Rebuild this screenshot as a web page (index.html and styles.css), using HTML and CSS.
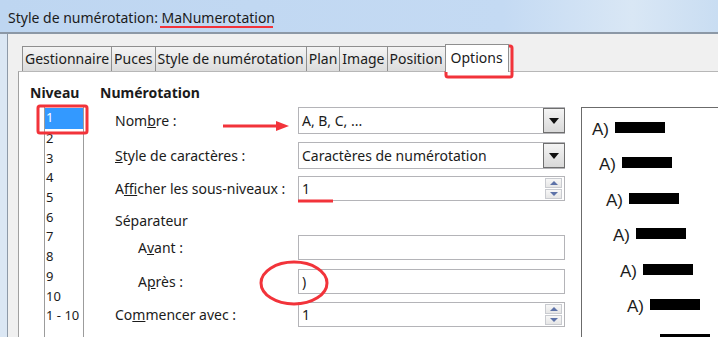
FILE: index.html
```html
<!DOCTYPE html>
<html>
  <head>
    <title>Style de numérotation</title>
    <link rel="stylesheet" href="styles.css">
  </head>
  <body>
    <div class="titlebar">Style de numérotation: MaNumerotation</div>

    <div class="window">
      <div class="tabs">
        <div class="tab">Gestionnaire</div>
        <div class="tab">Puces</div>
        <div class="tab">Style de numérotation</div>
        <div class="tab">Plan</div>
        <div class="tab">Image</div>
        <div class="tab">Position</div>
        <div class="tab active">Options</div>
      </div>

      <div class="panel">
        <div class="levels">
          <div class="heading">Niveau</div>
          <ul class="level-list">
            <li class="selected">1</li>
            <li>2</li>
            <li>3</li>
            <li>4</li>
            <li>5</li>
            <li>6</li>
            <li>7</li>
            <li>8</li>
            <li>9</li>
            <li>10</li>
            <li>1 - 10</li>
          </ul>
        </div>

        <div class="numbering">
          <div class="heading">Numérotation</div>
          <div class="form">
            <div class="row row-select">
              <label>Nom<u>b</u>re :</label>
              <div class="field select">
                <span class="value">A, B, C, ...</span>
                <span class="drop"></span>
              </div>
            </div>
            <div class="row row-select">
              <label><u>S</u>tyle de caractères :</label>
              <div class="field select">
                <span class="value">Caractères de numérotation</span>
                <span class="drop"></span>
              </div>
            </div>
            <div class="row row-spin">
              <label>A<u>f</u>ficher les sous-niveaux :</label>
              <div class="field spin">
                <span class="value">1</span>
                <span class="spin-buttons"><span class="up"></span><span class="down"></span></span>
              </div>
            </div>
            <div class="row row-caption">
              <label>Séparateur</label>
            </div>
            <div class="row row-text">
              <label class="indent">A<u>v</u>ant :</label>
              <div class="field"><span class="value"></span></div>
            </div>
            <div class="row row-text">
              <label class="indent">A<u>p</u>rès :</label>
              <div class="field"><span class="value">)</span></div>
            </div>
            <div class="row row-spin">
              <label>Co<u>m</u>mencer avec :</label>
              <div class="field spin">
                <span class="value">1</span>
                <span class="spin-buttons"><span class="up"></span><span class="down"></span></span>
              </div>
            </div>
          </div>
        </div>

        <div class="preview">
          <div class="preview-line" style="margin-left: 0px"><span>A)</span><i></i></div>
          <div class="preview-line" style="margin-left: 7px"><span>A)</span><i></i></div>
          <div class="preview-line" style="margin-left: 14px"><span>A)</span><i></i></div>
          <div class="preview-line" style="margin-left: 21px"><span>A)</span><i></i></div>
          <div class="preview-line" style="margin-left: 28px"><span>A)</span><i></i></div>
          <div class="preview-line" style="margin-left: 35px"><span>A)</span><i></i></div>
          <div class="preview-line tail" style="margin-left: 68px"><i></i></div>
        </div>
      </div>
    </div>

    <!-- annotations rouges par-dessus la capture -->
    <svg class="annotations" width="718" height="337" viewBox="0 0 718 337">
      <g fill="none" stroke="#f2333a" stroke-width="3">
        <line x1="160" y1="27" x2="273" y2="27" stroke-width="2" />
        <rect x="446" y="46" width="66" height="31" rx="2" />
        <rect x="38" y="106" width="49" height="27" rx="2" />
        <line x1="223" y1="126" x2="279" y2="126" />
        <line x1="298" y1="201" x2="333" y2="201" />
        <ellipse cx="294" cy="283" rx="33" ry="21" />
      </g>
      <polygon points="276,121 289,126 276,131" fill="#f2333a" />
    </svg>
  </body>
</html>
```

FILE: styles.css
```css
body {
  margin: 0;
  width: 718px;
  height: 337px;
  overflow: hidden;
  position: relative;
  font-family: "Noto Sans", sans-serif;
  font-size: 14px;
  color: #1b1b1b;
  background: #dbe7f4;
}
.titlebar {
  height: 34px;
  line-height: 36px;
  padding-left: 8px;
  background: linear-gradient(to right, #bed6f1, #c4daf3 70%, #d9e7f5 88%, #c9ddf2);
  border-bottom: 2px solid #8c98a6;
  box-sizing: border-box;
}
.window {
  margin-left: 7px;
  height: 303px;
  border-left: 1px solid #8e9aa8;
  background: #f0f0f0;
  padding: 12px 0 0 10px;
  box-sizing: border-box;
  display: flex;
  flex-direction: column;
}
.tabs {
  display: flex;
  align-items: flex-end;
  height: 25px;
  margin-left: 4px;
  position: relative;
  z-index: 1;
}
.tab {
  height: 25px;
  line-height: 24px;
  padding: 0 2px;
  box-sizing: border-box;
  border: 1px solid #8f8f8f;
  border-bottom: none;
  margin-right: -1px;
  background: linear-gradient(#f4f4f4, #dcdcdc);
}
.tab.active {
  height: 28px;
  line-height: 26px;
  padding: 0 5px;
  margin-left: 0;
  margin-bottom: -1px;
  background: #fff;
}
.panel {
  flex: 1;
  display: flex;
  background: #fff;
  border-left: 1px solid #a0a0a0;
  border-top: 1px solid #b7b7b7;
  padding: 11px 0 0 11px;
  overflow: hidden;
}
.heading {
  font-weight: bold;
  height: 24px;
  line-height: 20px;
}
.levels {
  width: 70px;
  flex-shrink: 0;
}
.levels .heading {
  height: 22px;
}
.level-list {
  list-style: none;
  margin: 0 0 0 14px;
  padding: 2px 0 0;
  width: 40px;
  height: 240px;
  box-sizing: border-box;
  border: 1px solid #9c9c9c;
  border-bottom: none;
  font-size: 13px;
}
.level-list li {
  height: 19.7px;
  line-height: 19.7px;
  padding-left: 1px;
  white-space: nowrap;
}
.level-list li.selected {
  background: #3399ff;
  color: #fff;
  height: 21px;
}
.numbering {
  width: 465px;
  flex-shrink: 0;
}
.form {
  padding-left: 15px;
}
.row {
  display: flex;
  align-items: center;
}
.row label {
  width: 183px;
  flex-shrink: 0;
}
.row label.indent {
  padding-left: 23px;
  box-sizing: border-box;
}
.row-select {
  height: 27px;
  margin-bottom: 8px;
}
.row-select + .row-select {
  margin-bottom: 7px;
}
.row-spin {
  height: 25px;
}
.row-caption {
  height: 34px;
  align-items: flex-start;
  padding-top: 10px;
  box-sizing: border-box;
}
.row-text {
  height: 25px;
  margin-bottom: 9px;
}
.row-text + .row-text {
  margin-bottom: 8px;
}
.field {
  width: 267px;
  height: 100%;
  box-sizing: border-box;
  border: 1px solid #b4b4b8;
  display: flex;
  align-items: center;
  background: #fff;
}
.field .value {
  flex: 1;
  padding-left: 3px;
}
.select .drop {
  width: 22px;
  height: 100%;
  box-sizing: border-box;
  border: 1px solid #6f6f6f;
  margin-right: -1px;
  background: linear-gradient(#f4f4f4, #d9d9d9);
  display: flex;
  align-items: center;
  justify-content: center;
}
.select .drop::after {
  content: "";
  border-left: 5px solid transparent;
  border-right: 5px solid transparent;
  border-top: 6px solid #111;
}
.spin-buttons {
  width: 17px;
  height: 21px;
  margin-right: 2px;
  display: flex;
  flex-direction: column;
  gap: 1px;
}
.spin-buttons span {
  flex: 1;
  border: 1px solid #c9cbd0;
  background: linear-gradient(#f7f7f7, #e6e6e6);
  display: flex;
  align-items: center;
  justify-content: center;
}
.spin-buttons .up::after {
  content: "";
  border-left: 4px solid transparent;
  border-right: 4px solid transparent;
  border-bottom: 4px solid #5d72a8;
}
.spin-buttons .down::after {
  content: "";
  border-left: 4px solid transparent;
  border-right: 4px solid transparent;
  border-top: 4px solid #5d72a8;
}
.preview {
  flex: 1;
  margin: 24px 0 0 16px;
  border: 1px solid #6b6b6b;
  border-right: none;
  border-bottom: none;
  padding: 12px 0 0 10px;
  font-family: "Liberation Sans", Arial, sans-serif;
  font-size: 17px;
}
.preview-line {
  display: flex;
  align-items: flex-start;
  height: 35.4px;
}
.preview-line span {
  line-height: 19px;
}
.preview-line i {
  width: 50px;
  height: 11px;
  margin: 2px 0 0 6px;
  background: #000;
}
.preview-line.tail i {
  margin-left: 0;
}
.annotations {
  position: absolute;
  top: 0;
  left: 0;
  pointer-events: none;
}
```
